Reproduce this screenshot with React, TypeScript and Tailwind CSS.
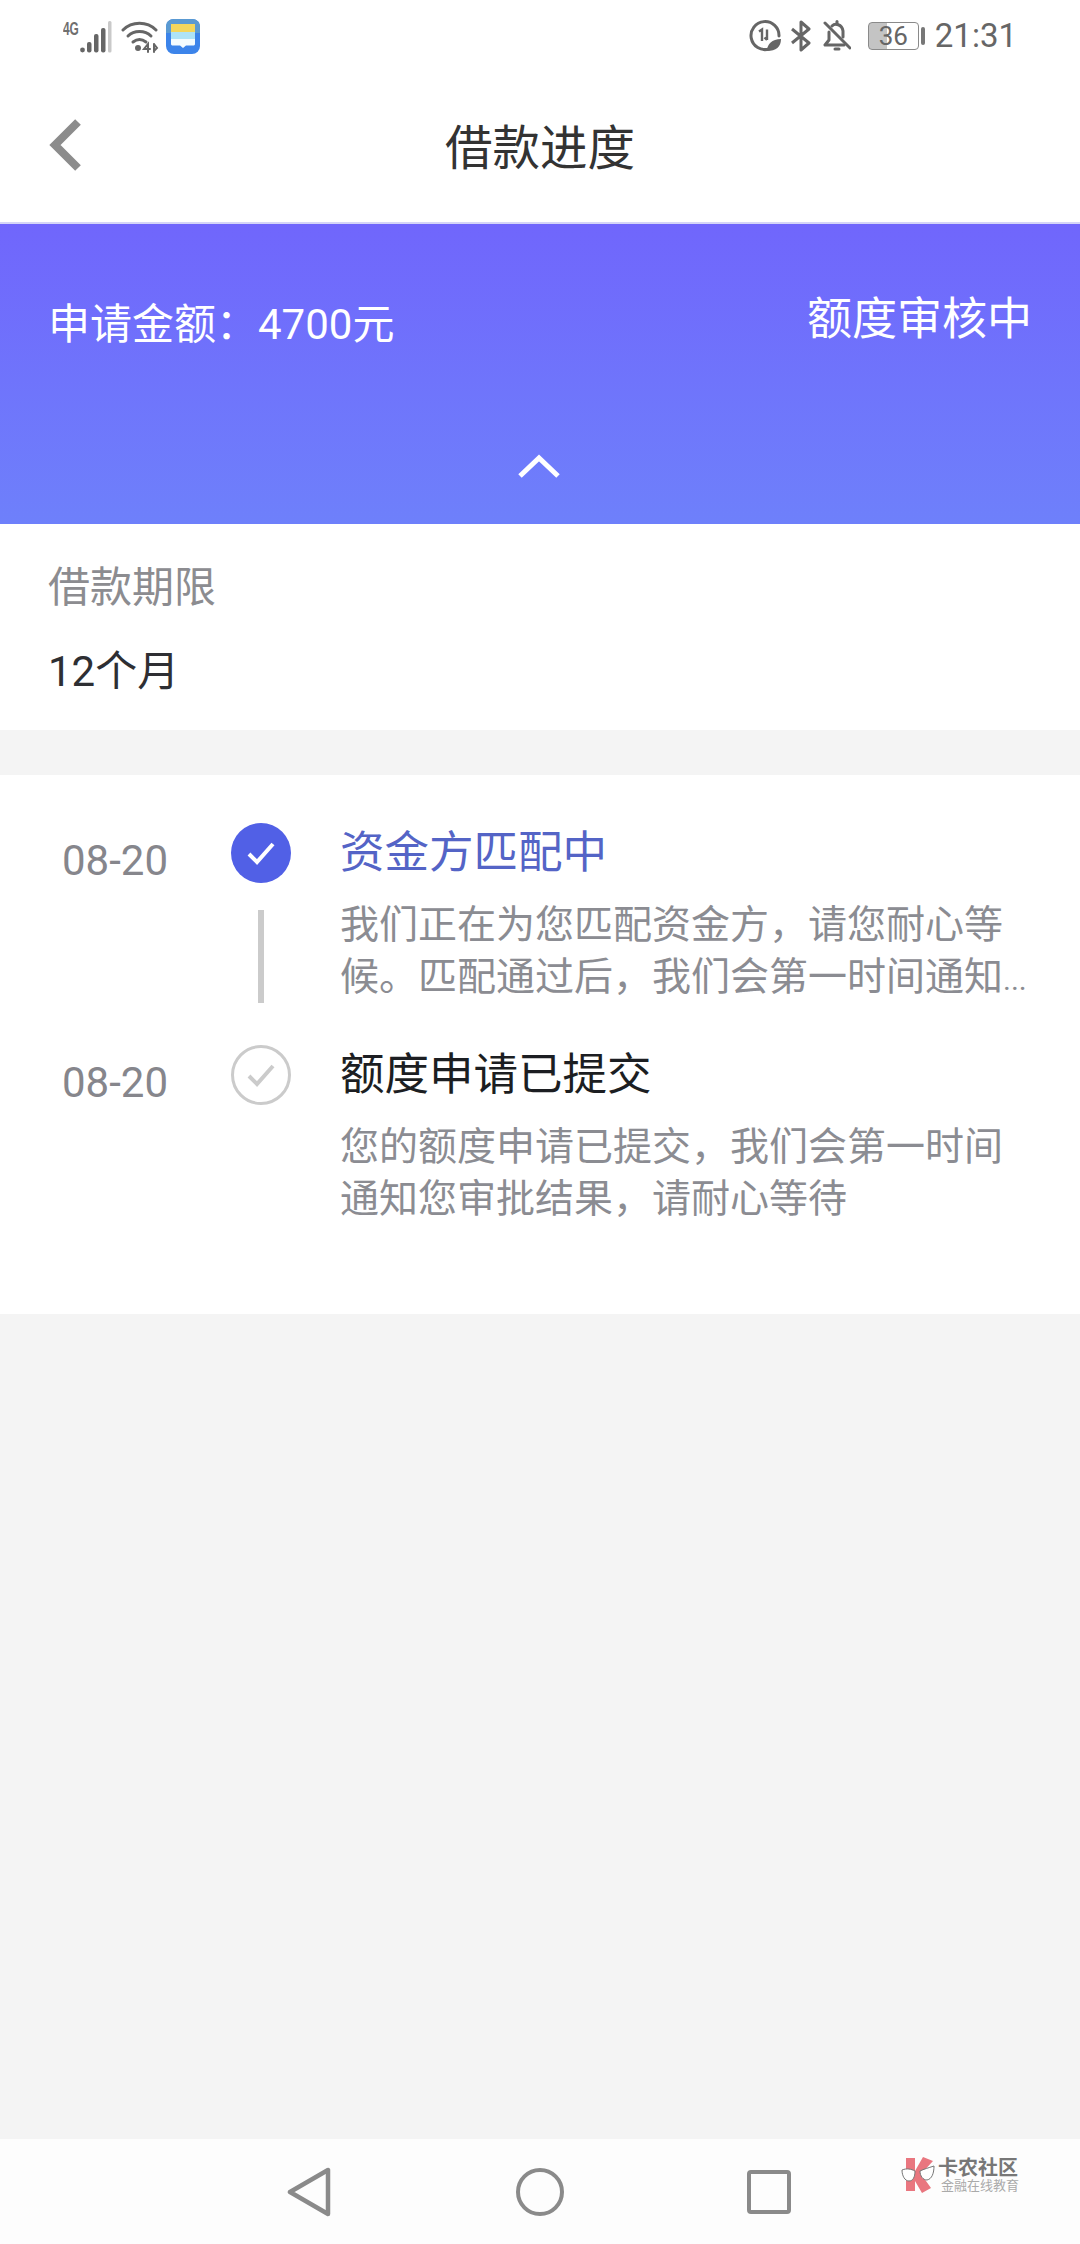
import type { ReactNode } from 'react';

const font = { fontFamily: 'Roboto, "Noto Sans CJK SC", sans-serif' };

function StatusLeft() {
  return (
    <div className="flex items-start">
      <span className="mt-[2px] w-[17px] origin-left scale-x-[0.66] font-['Liberation_Sans'] text-[18px] leading-[16px] font-bold whitespace-nowrap text-[#6f6f6f]">
        4G
      </span>
      <svg width="32" height="32" viewBox="0 0 32 32" className="mt-[2px]">
        <circle cx="2.5" cy="29" r="2.4" fill="#666" />
        <rect x="7" y="21" width="4.5" height="10.5" rx="2" fill="#666" />
        <rect x="14" y="13" width="4.5" height="18.5" rx="2" fill="#666" />
        <rect x="21" y="7" width="4.5" height="24.5" rx="2" fill="#666" />
        <rect x="28" y="0" width="3.5" height="31.5" rx="1.5" fill="#c9c9c9" />
      </svg>
      <svg width="38" height="32" viewBox="0 0 38 32" className="mt-[2px] ml-[9px]" fill="none" stroke="#666" strokeLinecap="round">
        <path d="M2 9 C11 0 26 0 35 9" strokeWidth="3" />
        <path d="M7 15 C13 9 24 9 30 15" strokeWidth="3" />
        <path d="M12 21 C16 18 21 18 25 21" strokeWidth="3" />
        <circle cx="17" cy="27" r="3" fill="#666" stroke="none" />
        <path d="M27 31 V23 L23 28 H29 M33 23 V31 M33 23 L36 27 L33 30" strokeWidth="2" />
      </svg>
      <svg width="34" height="35" viewBox="0 0 34 35" className="ml-[7px]">
        <rect width="34" height="35" rx="8" fill="#3c84ea" />
        <path d="M0 8 C0 3 3 0 8 0 H26 C31 0 34 3 34 8 V14 H0 Z" fill="#5a9ad2" />
        <rect x="5" y="5" width="24" height="8" fill="#f3d65c" />
        <rect x="5" y="13" width="24" height="7" fill="#aee3f6" />
        <path d="M5 20 H29 V25 C29 26 28 26.5 27 26.5 H20 L17 29 L14 26.5 H7 C6 26.5 5 26 5 25 Z" fill="#f4fbfe" />
      </svg>
    </div>
  );
}

function StatusRight() {
  return (
    <div className="flex items-center">
      <svg width="32" height="32" viewBox="0 0 32 32" fill="none">
        <path d="M20 29 A14 14 0 1 1 30 16" stroke="#666" strokeWidth="3" strokeLinecap="round" />
        <path d="M10 11.5 L13 9.5 V21 M18 9.5 V20 M18 20 L15.5 17.5" stroke="#666" strokeWidth="2.4" />
        <path d="M18 31 C18 24 23 19 32 19 C32 27 27 31 18 31 Z" fill="#666" />
      </svg>
      <svg width="20" height="32" viewBox="0 0 20 32" fill="none" className="ml-[10px]" stroke="#666" strokeWidth="3" strokeLinejoin="round">
        <path d="M1 9 L18 23 L10 30 V2 L18 9 L1 23" />
      </svg>
      <svg width="28" height="32" viewBox="0 0 28 32" fill="none" className="ml-[12px]" stroke="#666" strokeWidth="3" strokeLinejoin="round" strokeLinecap="round">
        <path d="M6 12 V20 L2 25 H21 M9 6 C12 3 19 4 20 11 V17" />
        <path d="M2 3 L27 28" />
        <path d="M14 1.5 V4" />
        <path d="M12 29 H16" />
      </svg>
      <div className="ml-[17px] flex h-[28px] w-[51px] items-center justify-center rounded-[4px] border-[1.5px] border-[#8a8a8a] bg-[linear-gradient(90deg,#c4c4c4_0%,#c4c4c4_36%,#ffffff_36%)] text-[26px] leading-none text-[#666]">
        36
      </div>
      <div className="ml-[2px] h-[18px] w-[4px] rounded-[2px] bg-[#777]" />
      <span className="ml-[10px] text-[33px] leading-none text-[#666]">21:31</span>
    </div>
  );
}

function Check({ color, width = 4 }: { color: string; width?: number }) {
  return (
    <svg width="30" height="30" viewBox="0 0 30 30" fill="none">
      <path d="M3 16 L11 24 L27 6" stroke={color} strokeWidth={width} />
    </svg>
  );
}

function Step({
  active,
  title,
  children,
  line,
}: {
  active?: boolean;
  title: string;
  children: ReactNode;
  line?: boolean;
}) {
  return (
    <div className="flex">
      <div className="w-[231px] shrink-0 pt-[14px] pl-[62px] text-[42px] leading-[48px] text-[#86868c]">08-20</div>
      <div className="flex w-[60px] shrink-0 flex-col items-center">
        {active ? (
          <div className="flex h-[60px] w-[60px] items-center justify-center rounded-full bg-[#5160e6]">
            <Check color="#ffffff" />
          </div>
        ) : (
          <div className="flex h-[60px] w-[60px] items-center justify-center rounded-full border-[3px] border-[#cbcbcb]">
            <Check color="#cbcbcb" />
          </div>
        )}
        {line && <div className="mt-[27px] h-[93px] w-[6px] bg-[#cbcbcb]" />}
      </div>
      <div className="ml-[49px] h-[180px] w-[700px] shrink-0">
        <div className={`mt-[1px] text-[44.5px] leading-[58px] ${active ? 'text-[#5464c6]' : 'text-[#1c1e22]'}`}>{title}</div>
        <div className="mt-[17px] text-[39px] leading-[52px] text-[#8b8c92]">{children}</div>
      </div>
    </div>
  );
}

export default function App() {
  return (
    <div className="flex min-h-[2244px] w-[1080px] flex-col bg-[#f4f4f4]" style={font}>
      <div className="bg-white">
        <div className="flex h-[72px] items-start justify-between pt-[19px] pr-[63px] pl-[63px]">
          <StatusLeft />
          <StatusRight />
        </div>
        <div className="relative flex h-[152px] items-center justify-center border-b-2 border-[#d5d5f7]">
          <svg width="36" height="54" viewBox="0 0 36 54" className="absolute top-[46px] left-[47px]" fill="none">
            <path d="M31 4 L8 27 L31 50" stroke="#8c8c8c" strokeWidth="8" />
          </svg>
          <h1 className="mt-[3px] text-[47.5px] leading-[60px] font-normal text-[#333]">借款进度</h1>
        </div>
      </div>

      <div className="h-[300px] bg-gradient-to-b from-[#7066fc] to-[#6e80fb] pr-[50px] pl-[48px] text-white">
        <div className="flex items-start justify-between">
          <div className="mt-[74px] text-[42px] leading-[54px]">{'申请金额\uFF1A4700元'}</div>
          <div className="mt-[68px] mr-[-2px] text-[45px] leading-[56px]">额度审核中</div>
        </div>
        <div className="mt-[101px] flex justify-center">
          <svg width="44" height="26" viewBox="0 0 44 26" fill="none">
            <path d="M3 23 L22 5 L41 23" stroke="#ffffff" strokeWidth="5" />
          </svg>
        </div>
      </div>

      <div className="h-[206px] bg-white px-[48px] pt-[37px]">
        <div className="text-[42px] leading-[54px] text-[#8c8c90]">借款期限</div>
        <div className="mt-[30px] text-[42px] leading-[54px] text-[#2e2f33]">12个月</div>
      </div>

      <div className="mt-[45px] flex h-[539px] flex-col gap-[42px] bg-white pt-[48px]">
        <Step active line title="资金方匹配中">
          <div>{'我们正在为您匹配资金方\uFF0C请您耐心等'}</div>
          <div className="h-[52px]">
            {'候。匹配通过后\uFF0C我们会第一时间通知'}
            <span className="text-[30px] leading-none">...</span>
          </div>
        </Step>
        <Step title="额度申请已提交">
          <div>{'您的额度申请已提交\uFF0C我们会第一时间'}</div>
          <div>{'通知您审批结果\uFF0C请耐心等待'}</div>
        </Step>
      </div>

      <div className="flex-1" />

      <div className="relative h-[105px] bg-[#fdfdfd]">
        <svg width="44" height="50" viewBox="0 0 44 50" fill="none" className="absolute top-[28px] left-[287px]">
          <path d="M41 3 V47 L3 25 Z" stroke="#8a8a8a" strokeWidth="4.5" strokeLinejoin="round" />
        </svg>
        <div className="absolute top-[29px] left-[516px] h-[48px] w-[48px] rounded-full border-[4px] border-[#8a8a8a]" />
        <div className="absolute top-[31px] left-[747px] h-[44px] w-[44px] rounded-[4px] border-[4px] border-[#8a8a8a]" />
        <div className="absolute top-[18px] left-[900px] flex items-start">
          <svg width="36" height="36" viewBox="0 0 34 36">
            <path d="M5 1 H14 V14 L22 0 L32 4 L20 17 L30 31 L21 36 L14 24 V34 H5 Z" fill="#e9767f" />
            <path d="M1 13 C6 11 10 12 14 14 C14 20 12 24 8 24 C4 24 1 19 1 13 Z M19 14 C23 12 27 11 33 9 C33 16 31 22 26 23 C22 23 19 19 19 14 Z" fill="#ffffff" stroke="#777" strokeWidth="1" />
          </svg>
          <div className="ml-[2px] flex flex-col">
            <span className="text-[20px] leading-[22px] font-bold text-[#777]">卡农社区</span>
            <span className="ml-[3px] text-[13px] leading-[14px] text-[#aaa]">金融在线教育</span>
          </div>
        </div>
      </div>
    </div>
  );
}
